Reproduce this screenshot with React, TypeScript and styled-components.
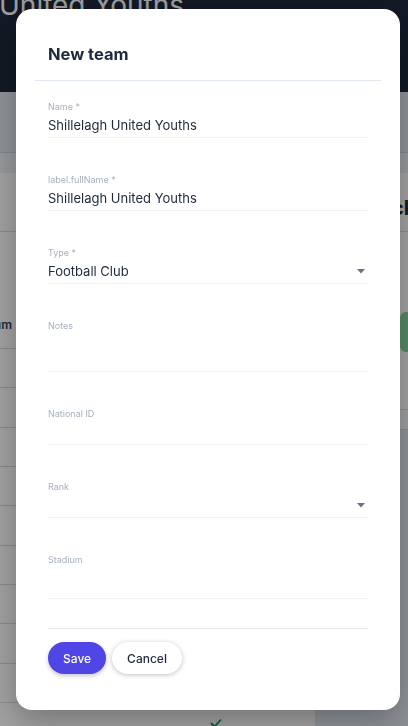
import React from 'react';
import styled, { createGlobalStyle } from 'styled-components';

const GlobalStyle = createGlobalStyle`
  html, body {
    margin: 0;
    padding: 0;
  }

  body {
    font-family: Inter, 'Noto Sans', sans-serif;
    background: #fff;
    overflow: hidden;
  }

  * {
    box-sizing: border-box;
  }
`;

/* ---------- page behind the dialog ---------- */

const Page = styled.div`
  width: 100%;
  height: 100vh;
  overflow: hidden;
  background: #fff;
`;

const TopBar = styled.header`
  height: 92px;
  background: #1e293b;
  overflow: hidden;
`;

const PageTitle = styled.h1`
  margin: -9px 0 0 -1px;
  font-size: 28px;
  line-height: 28px;
  font-weight: 400;
  color: #f8fafc;
  white-space: nowrap;
`;

const TabBar = styled.div`
  height: 61px;
  background: #e2e8f0;
  border-bottom: 1px solid #cbd5e1;
`;

const SubBar = styled.div`
  height: 20px;
  background: #eef2f6;
`;

const Content = styled.div`
  display: flex;
`;

const MainColumn = styled.div`
  flex: 0 0 315px;
  background: #fff;
`;

const Toolbar = styled.div`
  height: 59px;
  border-bottom: 1px solid #d5dbe3;
`;

const TableArea = styled.div`
  padding-top: 73px;
  margin-left: -40px;
`;

const TableRow = styled.div<{ $head?: boolean }>`
  display: grid;
  grid-template-columns: 52px 184px 40px 1fr;
  align-items: center;
  height: ${(p) => (p.$head ? '44px' : '39.35px')};
  border-bottom: 1px solid #d5dbe3;
  font-size: 12px;
  font-weight: ${(p) => (p.$head ? 600 : 400)};
  color: #334155;
`;

const HeadCell = styled.div`
  text-align: right;
  white-space: nowrap;
  padding-bottom: 4px;
`;

const CheckCell = styled.div`
  display: flex;
  justify-content: center;
  padding-top: 2px;
`;

const SideColumn = styled.div`
  flex: 1;
  background: #e2e8f0;
  height: 700px;
`;

const SideCard = styled.div`
  background: #fff;
`;

const SideHeading = styled.div`
  height: 59px;
  padding: 23px 0 0 5px;
  border-bottom: 1px solid #d5dbe3;
  font-size: 20px;
  line-height: 24px;
  font-weight: 700;
  color: #1e293b;
  white-space: nowrap;
`;

const SideBody = styled.div`
  height: 178px;
  padding: 80px 0 0 85px;
  border-bottom: 1px solid #d5dbe3;
`;

const GreenButton = styled.div`
  width: 60px;
  height: 40px;
  border-radius: 6px;
  background: #86d9a0;
  display: flex;
  align-items: center;
  padding-left: 8px;
  color: #fff;
  font-weight: 700;
`;

const SideFoot = styled.div`
  height: 20px;
  background: #f8fafc;
  border-bottom: 1px solid #d5dbe3;
`;

/* ---------- dialog ---------- */

const Overlay = styled.div`
  position: fixed;
  inset: 0;
  background: rgba(0, 0, 0, 0.37);
  padding: 9px 8px 9px 16px;
  display: flex;
  justify-content: flex-start;
  align-items: flex-start;
`;

const Modal = styled.div`
  width: 384px;
  flex-shrink: 0;
  background: #fff;
  border-radius: 16px;
  box-shadow: 0 12px 32px rgba(0, 0, 0, 0.28);
  display: flex;
  flex-direction: column;
`;

const ModalHeader = styled.div`
  padding: 35px 32px 16px 32px;
`;

const ModalTitle = styled.h2`
  margin: 0;
  font-size: 16.5px;
  line-height: 20px;
  font-weight: 700;
  color: #1e293b;
`;

const Divider = styled.div`
  height: 1px;
  margin: 0 19px;
  background: #e2e8f0;
`;

const ModalBody = styled.div`
  padding: 20px 32px 36px 32px;
  display: flex;
  flex-direction: column;
`;

const Fields = styled.div`
  display: flex;
  flex-direction: column;
  gap: 36px;
`;

const Field = styled.div`
  display: flex;
  flex-direction: column;
`;

const Label = styled.label`
  font-size: 9px;
  line-height: 12px;
  color: #a7b0be;
`;

const InputRow = styled.div<{ $height: number }>`
  height: ${(p) => p.$height + 1}px;
  display: flex;
  align-items: center;
  justify-content: space-between;
  border-bottom: 1px solid #eef1f5;
  font-size: 13px;
  color: #1e293b;
`;

const Caret = styled.svg`
  margin-right: 3px;
  flex-shrink: 0;
`;

const Footer = styled.div`
  margin-top: 29px;
  padding-top: 13px;
  border-top: 1px solid #e2e8f0;
  display: flex;
  gap: 6px;
`;

const Button = styled.button<{ $primary?: boolean }>`
  height: 32px;
  padding: 0 15px;
  border: none;
  border-radius: 16px;
  font-family: Inter, 'Noto Sans', sans-serif;
  font-size: 12px;
  font-weight: 500;
  background: ${(p) => (p.$primary ? '#4f46e5' : '#fff')};
  color: ${(p) => (p.$primary ? '#fff' : '#1e293b')};
  box-shadow: ${(p) =>
    p.$primary ? '0 2px 4px rgba(0, 0, 0, 0.22)' : '0 1px 5px rgba(0, 0, 0, 0.25)'};
  cursor: pointer;
`;

type FieldDef = {
  label: string;
  value?: string;
  select?: boolean;
  height?: number;
};

const fields: FieldDef[] = [
  { label: 'Name *', value: 'Shillelagh United Youths' },
  { label: 'label.fullName *', value: 'Shillelagh United Youths' },
  { label: 'Type *', value: 'Football Club', select: true },
  { label: 'Notes', height: 39 },
  { label: 'National ID' },
  { label: 'Rank', select: true },
  { label: 'Stadium', height: 32 },
];

const CheckIcon = () => (
  <svg width="12" height="10" viewBox="0 0 12 10" fill="none">
    <polyline points="1 5 4.5 8.5 11 1.5" stroke="#059669" strokeWidth="1.8" />
  </svg>
);

const Background = () => (
  <Page>
    <TopBar>
      <PageTitle>United Youths</PageTitle>
    </TopBar>
    <TabBar />
    <SubBar />
    <Content>
      <MainColumn>
        <Toolbar />
        <TableArea>
          <TableRow $head>
            <HeadCell>Stadium</HeadCell>
          </TableRow>
          {Array.from({ length: 10 }).map((_, i) => (
            <TableRow key={i}>
              <div />
              <div />
              <CheckCell>
                <CheckIcon />
              </CheckCell>
            </TableRow>
          ))}
        </TableArea>
      </MainColumn>
      <SideColumn>
        <SideCard>
          <SideHeading>Feedback</SideHeading>
          <SideBody>
            <GreenButton>+</GreenButton>
          </SideBody>
          <SideFoot />
        </SideCard>
      </SideColumn>
    </Content>
  </Page>
);

const App = () => {
  return (
    <>
      <GlobalStyle />
      <Background />
      <Overlay>
        <Modal>
          <ModalHeader>
            <ModalTitle>New team</ModalTitle>
          </ModalHeader>
          <Divider />
          <ModalBody>
            <Fields>
              {fields.map((f) => (
                <Field key={f.label}>
                  <Label>{f.label}</Label>
                  <InputRow $height={f.height ?? 24}>
                    <span>{f.value ?? ''}</span>
                    {f.select && (
                      <Caret width="8" height="5" viewBox="0 0 8 5">
                        <path d="M0 0 L8 0 L4 4.5 Z" fill="#64748b" />
                      </Caret>
                    )}
                  </InputRow>
                </Field>
              ))}
            </Fields>
            <Footer>
              <Button $primary>Save</Button>
              <Button>Cancel</Button>
            </Footer>
          </ModalBody>
        </Modal>
      </Overlay>
    </>
  );
};

export default App;
